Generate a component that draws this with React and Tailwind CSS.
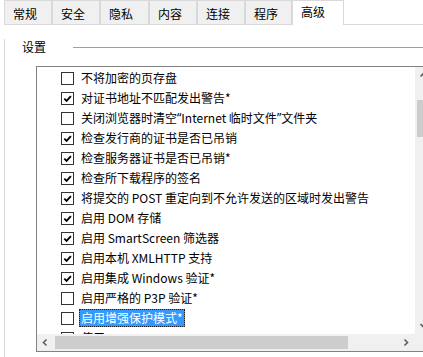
const tabs = [
  { label: '常规', w: 'w-[48px]' },
  { label: '安全', w: 'w-[48px]' },
  { label: '隐私', w: 'w-[49px]' },
  { label: '内容', w: 'w-[48px]' },
  { label: '连接', w: 'w-[48px]' },
  { label: '程序', w: 'w-[47px]' },
];

const Q = ({ children }) => <span className="font-['Noto_Sans',sans-serif]">{children}</span>;

const items = [
  { key: 'a', text: '不将加密的页存盘', checked: false },
  { key: 'b', text: '对证书地址不匹配发出警告*', checked: true },
  {
    key: 'c',
    text: (
      <>
        关闭浏览器时清空<Q>“</Q>Internet 临时文件<Q>”</Q>文件夹
      </>
    ),
    checked: false,
  },
  { key: 'd', text: '检查发行商的证书是否已吊销', checked: true },
  { key: 'e', text: '检查服务器证书是否已吊销*', checked: true },
  { key: 'f', text: '检查所下载程序的签名', checked: true },
  { key: 'g', text: '将提交的 POST 重定向到不允许发送的区域时发出警告', checked: true },
  { key: 'h', text: '启用 DOM 存储', checked: true },
  { key: 'i', text: '启用 SmartScreen 筛选器', checked: true },
  { key: 'j', text: '启用本机 XMLHTTP 支持', checked: true },
  { key: 'k', text: '启用集成 Windows 验证*', checked: true },
  { key: 'l', text: '启用严格的 P3P 验证*', checked: false },
  { key: 'm', text: '启用增强保护模式*', checked: false, selected: true },
  { key: 'n', text: '使用 SSL 3.0', checked: false },
];

const Checkbox = ({ checked }) => (
  <div className="w-[13px] h-[13px] shrink-0 border border-[#333333] bg-white">
    {checked && (
      <svg width="11" height="11" viewBox="0 0 11 11">
        <path d="M2.3 5.6 L4.6 7.9 L8.9 3.2" fill="none" stroke="#000" strokeWidth="1.8" />
      </svg>
    )}
  </div>
);

const Chevron = ({ dir }) => {
  const d = {
    left: 'M5.5 1.5 L2.5 4.5 L5.5 7.5',
    right: 'M2.5 1.5 L5.5 4.5 L2.5 7.5',
    up: 'M1.5 5.5 L4.5 2.5 L7.5 5.5',
    down: 'M1.5 3 L4.5 6 L7.5 3',
  }[dir];
  return (
    <svg width="9" height="9" viewBox="0 0 9 9">
      <path d={d} fill="none" stroke="#606060" strokeWidth="1.6" />
    </svg>
  );
};

const App = () => {
  return (
    <div className="w-[423px] h-[357px] overflow-hidden bg-white text-[12px] text-black font-['Noto_Sans_CJK_SC','Noto_Sans',sans-serif] leading-none">
      {/* tab strip */}
      <div className="flex h-[25px] pl-[4px]">
        {tabs.map((t) => (
          <div
            key={t.label}
            className={`${t.w} h-[25px] shrink-0 flex items-center pt-[2px] pl-[8px] border border-[#d9d9d9] bg-[#f0f0f0]`}
          >
            {t.label}
          </div>
        ))}
        <div className="w-[52px] h-[25px] shrink-0 flex items-center pb-[2px] pl-[8px] border-t border-x border-[#d9d9d9] bg-white">
          高级
        </div>
        <div className="flex-1 border-b border-[#d9d9d9]"></div>
      </div>

      {/* panel */}
      <div className="ml-[4px] h-[332px] border-l border-[#d9d9d9] pl-[17px]">
        <div className="flex items-center h-[16px] mt-[14px]">
          <span>设置</span>
          <div className="ml-[27px] flex-1 h-px bg-[#a0a0a0]"></div>
        </div>

        <div className="ml-[14px] mt-[11px] w-[397px] h-[286px] shrink-0 border border-[#828282] flex flex-col">
          <div className="flex h-[267px]">
            <div className="flex-1 overflow-hidden pt-[1px] pl-[24px]">
              {items.map((it) => (
                <div key={it.key} className="h-[20px] flex items-center whitespace-nowrap">
                  <Checkbox checked={it.checked} />
                  <span
                    className={`ml-[5px] h-[18px] px-[1px] flex items-center border ${
                      it.selected
                        ? 'bg-[#3399ff] text-white border-dotted border-[#1a1a1a]'
                        : 'border-transparent'
                    }`}
                  >
                    {it.text}
                  </span>
                </div>
              ))}
            </div>
            <div className="w-[17px] bg-[#f0f0f0] flex flex-col">
              <div className="h-[17px] flex items-center justify-center">
                <Chevron dir="up" />
              </div>
              <div className="flex-1 px-[2px]">
                <div className="mt-[16px] h-[37px] bg-[#cdcdcd]"></div>
              </div>
              <div className="h-[17px] flex items-center justify-center">
                <Chevron dir="down" />
              </div>
            </div>
          </div>
          <div className="flex h-[17px]">
            <div className="flex-1 flex bg-[#f0f0f0]">
              <div className="w-[17px] flex items-center justify-center">
                <Chevron dir="left" />
              </div>
              <div className="flex-1 py-[2px]">
                <div className="ml-[1px] w-[293px] h-full bg-[#cdcdcd]"></div>
              </div>
              <div className="w-[17px] flex items-center justify-center">
                <Chevron dir="right" />
              </div>
            </div>
            <div className="w-[17px] bg-[#f0f0f0]"></div>
          </div>
        </div>
      </div>
    </div>
  );
};

export default App;
